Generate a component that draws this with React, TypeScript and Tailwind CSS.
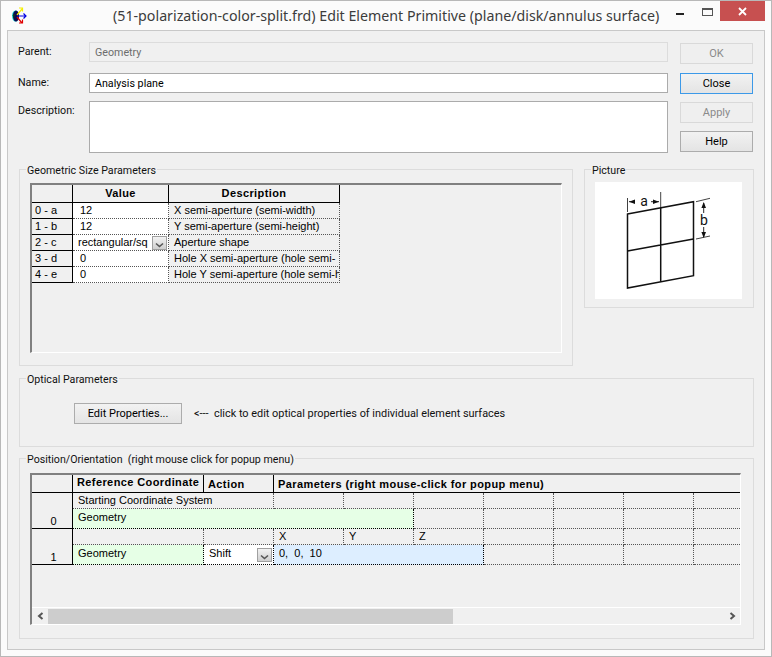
import React from 'react';

const titleFont = 'font-["Noto_Sans",sans-serif]';
const uiFont = 'font-["Roboto",sans-serif]';
const gridFont = 'font-["Liberation_Sans",sans-serif]';

const Dropdown = () => (
    <span className="ml-auto flex h-[14px] w-[15px] shrink-0 items-end justify-center border border-[#a0a0a0] bg-gradient-to-b from-[#f2f2f2] to-[#cfcfcf] pb-[1px]">
        <svg width="9" height="6" viewBox="0 0 9 6" fill="none" stroke="#555" strokeWidth="1.6">
            <path d="M1 1.5 L4.5 4.5 L8 1.5" />
        </svg>
    </span>
);

const Button: React.FC<{ label: string; disabled?: boolean; focused?: boolean; className?: string }> = ({ label, disabled, focused, className = '' }) => (
    <button
        className={`flex h-[21px] items-center justify-center border pt-[1px] text-[11px] ${
            disabled
                ? 'border-[#d9d9d9] bg-[#efefef] text-[#8a8a8a]'
                : focused
                  ? 'border-[#3c99e8] bg-gradient-to-b from-[#f2f2f2] to-[#e4e4e4] text-black'
                  : 'border-[#acacac] bg-gradient-to-b from-[#f2f2f2] to-[#e4e4e4] text-black'
        } ${className}`}
    >
        {label}
    </button>
);

const Group: React.FC<{ title: string; className?: string; children?: React.ReactNode }> = ({ title, className = '', children }) => (
    <fieldset className={`min-w-0 border border-[#dcdcdc] ${className}`}>
        <legend className="ml-[6px] whitespace-pre px-[1px] text-[10.65px] leading-[13px] text-[#111]">
            <span className="relative top-[1px]">{title}</span>
        </legend>
        {children}
    </fieldset>
);

const RowHead: React.FC<{ children?: React.ReactNode; className?: string }> = ({ children, className = '' }) => (
    <div className={`flex border-r border-b border-black pl-[3px] ${className}`}>{children}</div>
);

const Cell: React.FC<{ children?: React.ReactNode; className?: string }> = ({ children, className = '' }) => (
    <div className={`flex items-center overflow-hidden whitespace-nowrap border-r border-b border-dotted border-[#555] pl-[5px] ${className}`}>{children}</div>
);

const HeadCell: React.FC<{ children?: React.ReactNode; className?: string }> = ({ children, className = '' }) => (
    <div className={`overflow-hidden border-r border-b border-black font-bold leading-[14px] tracking-[0.4px] ${className}`}>{children}</div>
);

const sizeRows = [
    { id: '0 - a', value: '12', desc: 'X semi-aperture (semi-width)' },
    { id: '1 - b', value: '12', desc: 'Y semi-aperture (semi-height)' },
    { id: '2 - c', value: 'rectangular/sq', desc: 'Aperture shape', select: true },
    { id: '3 - d', value: '0', desc: 'Hole X semi-aperture (hole semi-' },
    { id: '4 - e', value: '0', desc: 'Hole Y semi-aperture (hole semi-h' },
];

const SizeGrid = () => (
    <div className={`mx-[10px] mt-[7px] h-[170px] border-t-2 border-l-2 border-t-[#808080] border-l-[#808080] border-r border-b border-r-white border-b-white text-[11px] text-black ${gridFont}`}>
        <div className="grid w-fit grid-cols-[41px_96px_171px] grid-rows-[18px_16px_16px_16px_16px_16px]">
            <HeadCell />
            <HeadCell className="text-center leading-[17px]">Value</HeadCell>
            <HeadCell className="text-center leading-[17px]">Description</HeadCell>
            {sizeRows.map((r) => (
                <React.Fragment key={r.id}>
                    <RowHead className="items-center">{r.id}</RowHead>
                    <Cell className={`bg-white ${r.select ? 'pl-[4px] pr-[1px]' : 'pl-[7px]'}`}>
                        {r.value}
                        {r.select && <Dropdown />}
                    </Cell>
                    <Cell className="pl-[4px]">{r.desc}</Cell>
                </React.Fragment>
            ))}
        </div>
    </div>
);

const Blank: React.FC<{ n: number }> = ({ n }) => (
    <>
        {Array.from({ length: n }).map((_, i) => (
            <Cell key={i} />
        ))}
    </>
);

const PositionGrid = () => (
    <div className={`ml-[10px] mr-[12px] mt-[8px] flex h-[152px] flex-col overflow-hidden border-t-2 border-l-2 border-t-[#808080] border-l-[#808080] border-r border-b border-r-white border-b-white text-[11px] text-black ${gridFont}`}>
        <div className="grid w-[712px] grid-cols-[41px_131px_70px_70px_70px_70px_70px_70px_70px_50px] grid-rows-[18px_16px_20px_16px_20px]">
            <HeadCell />
            <HeadCell className="pl-[4px] leading-[13px]">Reference Coordinate System</HeadCell>
            <HeadCell className="pl-[4px] leading-[19px]">Action</HeadCell>
            <HeadCell className="col-span-7 border-r-0 pl-[4px] leading-[19px]">Parameters (right mouse-click for popup menu)</HeadCell>

            <RowHead className="row-span-2 items-end justify-center pl-0 leading-[14px]">0</RowHead>
            <Cell className="col-span-2 pl-[4px]">Starting Coordinate System</Cell>
            <Blank n={7} />
            <Cell className="col-span-4 border-black bg-[#e6ffe6] pl-[4px] pb-[2px]">Geometry</Cell>
            <Blank n={5} />

            <RowHead className="row-span-2 items-end justify-center pl-0 leading-[14px]">1</RowHead>
            <Cell />
            <Cell />
            <Cell className="pl-[3px]">X</Cell>
            <Cell className="pl-[3px]">Y</Cell>
            <Cell className="pl-[3px]">Z</Cell>
            <Blank n={4} />
            <Cell className="border-black bg-[#e6ffe6] pl-[4px] pb-[2px]">Geometry</Cell>
            <Cell className="border-black bg-white pl-[2px] pr-[1px]">
                <span className="mb-[3px]">Shift</span>
                <Dropdown />
            </Cell>
            <Cell className="col-span-3 border-black bg-[#ddeeff] pl-[5px] pb-[2px]">0,&nbsp; 0,&nbsp; 10</Cell>
            <Blank n={4} />
        </div>
        <div className="mt-auto flex h-[17px] items-center border-t border-white">
            <span className="flex w-[16px] justify-center">
                <svg width="7" height="8" viewBox="0 0 7 8" fill="none" stroke="#555" strokeWidth="2">
                    <path d="M5.5 1 L2 4 L5.5 7" />
                </svg>
            </span>
            <div className="h-[15px] w-[405px] bg-[#cdcdcd]" />
            <span className="ml-auto flex w-[16px] justify-center">
                <svg width="7" height="8" viewBox="0 0 7 8" fill="none" stroke="#555" strokeWidth="2">
                    <path d="M1.5 1 L5 4 L1.5 7" />
                </svg>
            </span>
        </div>
    </div>
);

const Diagram = () => (
    <svg width="147" height="117" viewBox="0 0 147 117" fill="none" stroke="#111">
        <path d="M32.5 32 L98.5 19.7 L98.5 93.7 L32.5 106 Z" strokeWidth="1.5" />
        <path d="M65.7 25.7 L65.7 99.7 M32.5 69 L98.5 57" strokeWidth="1.5" />
        <path d="M32.5 16 L32.5 30 M65.7 10 L65.7 26 M101 19.7 L115 16.3 M101 57 L115 54" strokeWidth="0.8" />
        <path d="M34 19.7 L40 19.7 M56 19.7 L64 19.7 M108.7 21 L108.7 31 M108.7 45 L108.7 55" strokeWidth="0.9" />
        <path d="M34 19.7 L40 17.4 L40 22 Z M64 19.7 L58 17.4 L58 22 Z M108.7 20 L106.4 26 L111 26 Z M108.7 56 L106.4 50 L111 50 Z" fill="#111" stroke="none" />
        <text x="49" y="23.5" textAnchor="middle" fontSize="14" fill="#111" stroke="none">a</text>
        <text x="109" y="42.5" textAnchor="middle" fontSize="14" fill="#111" stroke="none">b</text>
    </svg>
);

const AppIcon = () => (
    <svg width="16" height="18" viewBox="0 0 16 18" fill="none" className="ml-[10px] shrink-0">
        <ellipse cx="4.5" cy="9" rx="3.5" ry="5.5" fill="#19d6d6" />
        <ellipse cx="5" cy="9" rx="3" ry="5.5" fill="#0a0a50" />
        <path d="M1.5 8 L3 12 L4 7 Z" fill="#0a3a20" />
        <path d="M6 8 L11 2 M8 1 H11.5 V4.5" stroke="#f5f000" strokeWidth="1.2" />
        <path d="M6 9 H15 M12.5 6.5 L15 9 L12.5 11.5" stroke="#0000e0" strokeWidth="1.2" />
        <path d="M6 10 L11 16 M8 16 H11.5 V12.5" stroke="#e00000" strokeWidth="1.2" />
    </svg>
);

export default function App() {
    return (
        <div className={`flex h-[657px] w-[772px] flex-col overflow-hidden border border-[#b8b8b8] bg-[#fbfbfb] ${uiFont}`}>
            {/* Title bar */}
            <div className="flex h-[29px] shrink-0 items-start">
                <div className="flex h-full items-center">
                    <AppIcon />
                </div>
                <div className={`ml-[86px] mt-[5px] whitespace-nowrap text-[14.22px] leading-[20px] text-[#3c3c3c] ${titleFont}`}>
                    (51-polarization-color-split.frd) Edit Element Primitive (plane/disk/annulus surface)
                </div>
                <div className="ml-auto flex items-start pr-[6px]">
                    <div className="mt-[12px] mr-[18px] h-[2px] w-[8px] bg-[#222]" />
                    <div className="mt-[7px] mr-[7px] h-[8px] w-[11px] border border-t-2 border-[#555]" />
                    <div className="flex h-[20px] w-[45px] items-center justify-center bg-[#c75050]">
                        <svg width="9" height="9" viewBox="0 0 9 9" stroke="white" strokeWidth="1.8">
                            <path d="M1 1 L8 8 M8 1 L1 8" />
                        </svg>
                    </div>
                </div>
            </div>

            {/* Dialog body */}
            <div className="mx-[6px] h-[620px] border border-[#c8c8c8] bg-[#f0f0f0] pl-[11px] pr-[9px] text-[10.7px] text-[#111]">
                <div className="mt-[11px] flex">
                    <div className="flex w-[649px] flex-col">
                        <div className="flex h-[20px]">
                            <span className="w-[70px] -ml-[1px] leading-[20px]">Parent:</span>
                            <div className="ml-[1px] flex w-[579px] items-center border border-[#dcdcdc] pt-[2px] pl-[5px] text-[#6d6d6d]">Geometry</div>
                        </div>
                        <div className="mt-[11px] flex h-[20px]">
                            <span className="w-[70px] -ml-[1px] leading-[20px]">Name:</span>
                            <div className="ml-[1px] flex w-[579px] items-center border border-[#ababab] bg-white pt-[2px] pl-[5px] text-black">Analysis plane</div>
                        </div>
                        <div className="mt-[8px] flex h-[52px]">
                            <span className="w-[70px] -ml-[1px] leading-[20px]">Description:</span>
                            <div className="ml-[1px] w-[579px] border border-[#ababab] bg-white" />
                        </div>
                    </div>
                    <div className="ml-[12px] mt-[1px] flex w-[73px] flex-col">
                        <Button label="OK" disabled />
                        <Button label="Close" focused className="mt-[9px]" />
                        <Button label="Apply" disabled className="mt-[8px]" />
                        <Button label="Help" className="mt-[8px]" />
                    </div>
                </div>

                <div className="mt-[10px] flex">
                    <Group title="Geometric Size Parameters" className="h-[203px] w-[554px]">
                        <SizeGrid />
                    </Group>
                    <Group title="Picture" className="ml-[11px] h-[145px] w-[170px]">
                        <div className="ml-[10px] mt-[6px] flex h-[117px] w-[147px] bg-white">
                            <Diagram />
                        </div>
                    </Group>
                </div>

                <Group title="Optical Parameters" className="mt-[6px] h-[75px] w-[735px]">
                    <div className="ml-[54px] mt-[18px] flex items-center">
                        <Button label="Edit Properties..." className="w-[108px]" />
                        <span className="ml-[12px] whitespace-pre pt-[1px] text-[10.9px]">{'<---  click to edit optical properties of individual element surfaces'}</span>
                    </div>
                </Group>

                <Group title="Position/Orientation  (right mouse click for popup menu)" className="mt-[5px] h-[187px] w-[735px]">
                    <PositionGrid />
                </Group>
            </div>
        </div>
    );
}
